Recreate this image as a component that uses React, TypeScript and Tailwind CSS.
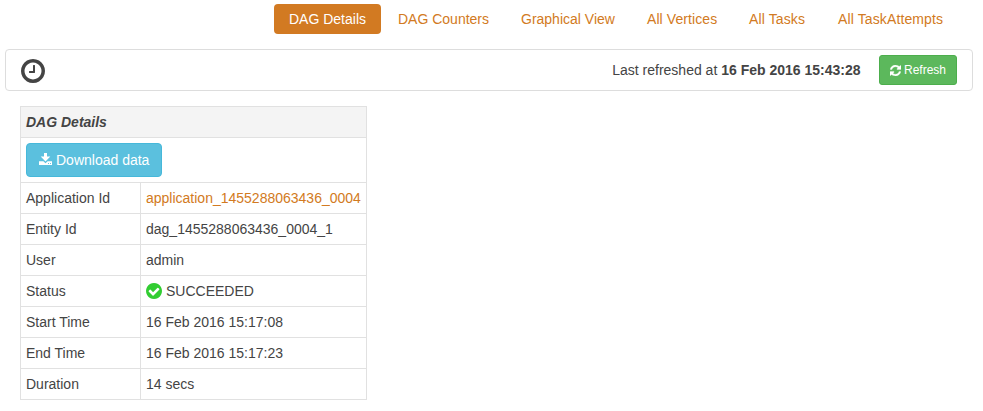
import React from "react";

const TABS = [
  { label: "DAG Details", width: "w-[107px]", tracking: "tracking-normal" },
  { label: "DAG Counters", width: "w-[121px]", tracking: "tracking-normal" },
  { label: "Graphical View", width: "w-[124px]", tracking: "tracking-normal" },
  { label: "All Vertices", width: "w-[100px]", tracking: "tracking-[0.08px]" },
  { label: "All Tasks", width: "w-[87px]", tracking: "tracking-[0.12px]" },
  { label: "All TaskAttempts", width: "w-[135px]", tracking: "tracking-[0.12px]" },
];

const CLOCK =
  "M1024 544v448q0 14-9 23t-23 9h-320q-14 0-23-9t-9-23v-64q0-14 9-23t23-9h224v-352q0-14 9-23t23-9h64q14 0 23 9t9 23zm416 352q0-148-73-273t-198-198-273-73-273 73-198 198-73 273 73 273 198 198 273 73 273-73 198-198 73-273zm224 0q0 209-103 385.5t-279.5 279.5-385.5 103-385.5-103-279.5-279.5-103-385.5 103-385.5 279.5-279.5 385.5-103 385.5 103 279.5 279.5 103 385.5z";
const REFRESH =
  "M1639 1056q0 5-1 7-64 268-268 434.5t-478 166.5q-146 0-282.5-55t-243.5-157l-129 129q-19 19-45 19t-45-19-19-45v-448q0-26 19-45t45-19h448q26 0 45 19t19 45-19 45l-137 137q71 66 161 102t187 36q134 0 250-65t186-179q11-17 53-117 8-23 30-23h192q13 0 22.5 9.5t9.5 22.5zm25-800v448q0 26-19 45t-45 19h-448q-26 0-45-19t-19-45 19-45l138-138q-148-137-349-137-134 0-250 65t-186 179q-11 17-53 117-8 23-30 23h-199q-13 0-22.5-9.5t-9.5-22.5v-7q65-268 270-434.5t480-166.5q146 0 284 55.5t245 156.5l130-129q19-19 45-19t45 19 19 45z";
const DOWNLOAD =
  "M5 0h3v3.4h3.3L6.5 8.4 1.7 3.4H5zM0 8.3h4.4L6.5 10.2 8.6 8.3H13V12H0zM9 10v.9h.9V10zm2 0v.9h.9V10z";
const CHECK =
  "M1412 734q0-28-18-46l-91-90q-19-19-45-19t-45 19l-408 407-226-226q-19-19-45-19t-45 19l-91 90q-18 18-18 46 0 27 18 45l362 362q19 19 45 19 27 0 46-19l543-543q18-18 18-45zm252 162q0 209-103 385.5t-279.5 279.5-385.5 103-385.5-103-279.5-279.5-103-385.5 103-385.5 279.5-279.5 385.5-103 385.5 103 279.5 279.5 103 385.5z";

function Icon({ d, className, viewBox = "128 128 1536 1536" }: { d: string; className: string; viewBox?: string }) {
  return (
    <svg viewBox={viewBox} fill="currentColor" className={`shrink-0 ${className}`} aria-hidden="true">
      <path d={d} fillRule="evenodd" />
    </svg>
  );
}

function Row({ label, children }: { label: string; children: React.ReactNode }) {
  return (
    <div className="flex h-[31px] border-t border-[#e1e1e1]">
      <div className="flex w-[120px] items-center border-r border-[#e1e1e1] pl-[5px]">{label}</div>
      <div className="flex flex-1 items-center pl-[5px] whitespace-nowrap">{children}</div>
    </div>
  );
}

export default function App() {
  return (
    <div className="h-[411px] w-[983px] overflow-hidden bg-white pt-1 font-['Liberation_Sans',Arial,sans-serif] text-[14px] leading-5 text-[#444]">
      <nav className="ml-[274px] flex h-[30px] gap-[2px] whitespace-nowrap">
        {TABS.map((tab, i) => (
          <a
            key={tab.label}
            className={`flex shrink-0 items-center rounded-[4px] pl-[15px] ${tab.width} ${tab.tracking} ${
              i === 0 ? "bg-[#d27a22] text-white" : "text-[#d27a22]"
            }`}
          >
            {tab.label}
          </a>
        ))}
      </nav>

      <div className="mt-[15px] ml-[5px] flex h-[42px] w-[968px] items-center rounded-[4px] border border-[#ddd] pr-[15px] pl-[15px]">
        <Icon d={CLOCK} className="mt-[2px] size-6" />
        <div className="ml-auto whitespace-nowrap">
          Last refreshed at <b>16 Feb 2016 15:43:28</b>
        </div>
        <button className="ml-[18.5px] flex h-[30px] w-[78px] items-center rounded-[3px] border border-[#4cae4c] bg-[#5cb85c] pl-[10px] text-[12px] text-white">
          <Icon d={REFRESH} className="mr-[3px] size-[11px] stroke-current stroke-[40]" />
          Refresh
        </button>
      </div>

      <div className="mt-[15px] ml-5 w-[347px] border border-[#e1e1e1]">
        <div className="flex h-[30px] items-center bg-[#f4f4f4] pl-[5px] font-bold italic">DAG Details</div>
        <div className="flex h-[45px] items-center border-t border-[#e1e1e1] pl-[5px]">
          <button className="flex h-[34px] w-[136px] items-center rounded-[4px] border border-[#46b8da] bg-[#5bc0de] pl-3 text-white">
            <Icon d={DOWNLOAD} viewBox="0 0 13 12" className="mr-1 mb-[2px] h-3 w-[13px]" />
            Download data
          </button>
        </div>
        <Row label="Application Id">
          <a className="text-[#d27a22]">application_1455288063436_0004</a>
        </Row>
        <Row label="Entity Id">dag_1455288063436_0004_1</Row>
        <Row label="User">admin</Row>
        <Row label="Status">
          <Icon d={CHECK} className="mr-1 size-4 text-[#32cd32]" />
          SUCCEEDED
        </Row>
        <Row label="Start Time">16 Feb 2016 15:17:08</Row>
        <Row label="End Time">16 Feb 2016 15:17:23</Row>
        <Row label="Duration">14 secs</Row>
      </div>
    </div>
  );
}
